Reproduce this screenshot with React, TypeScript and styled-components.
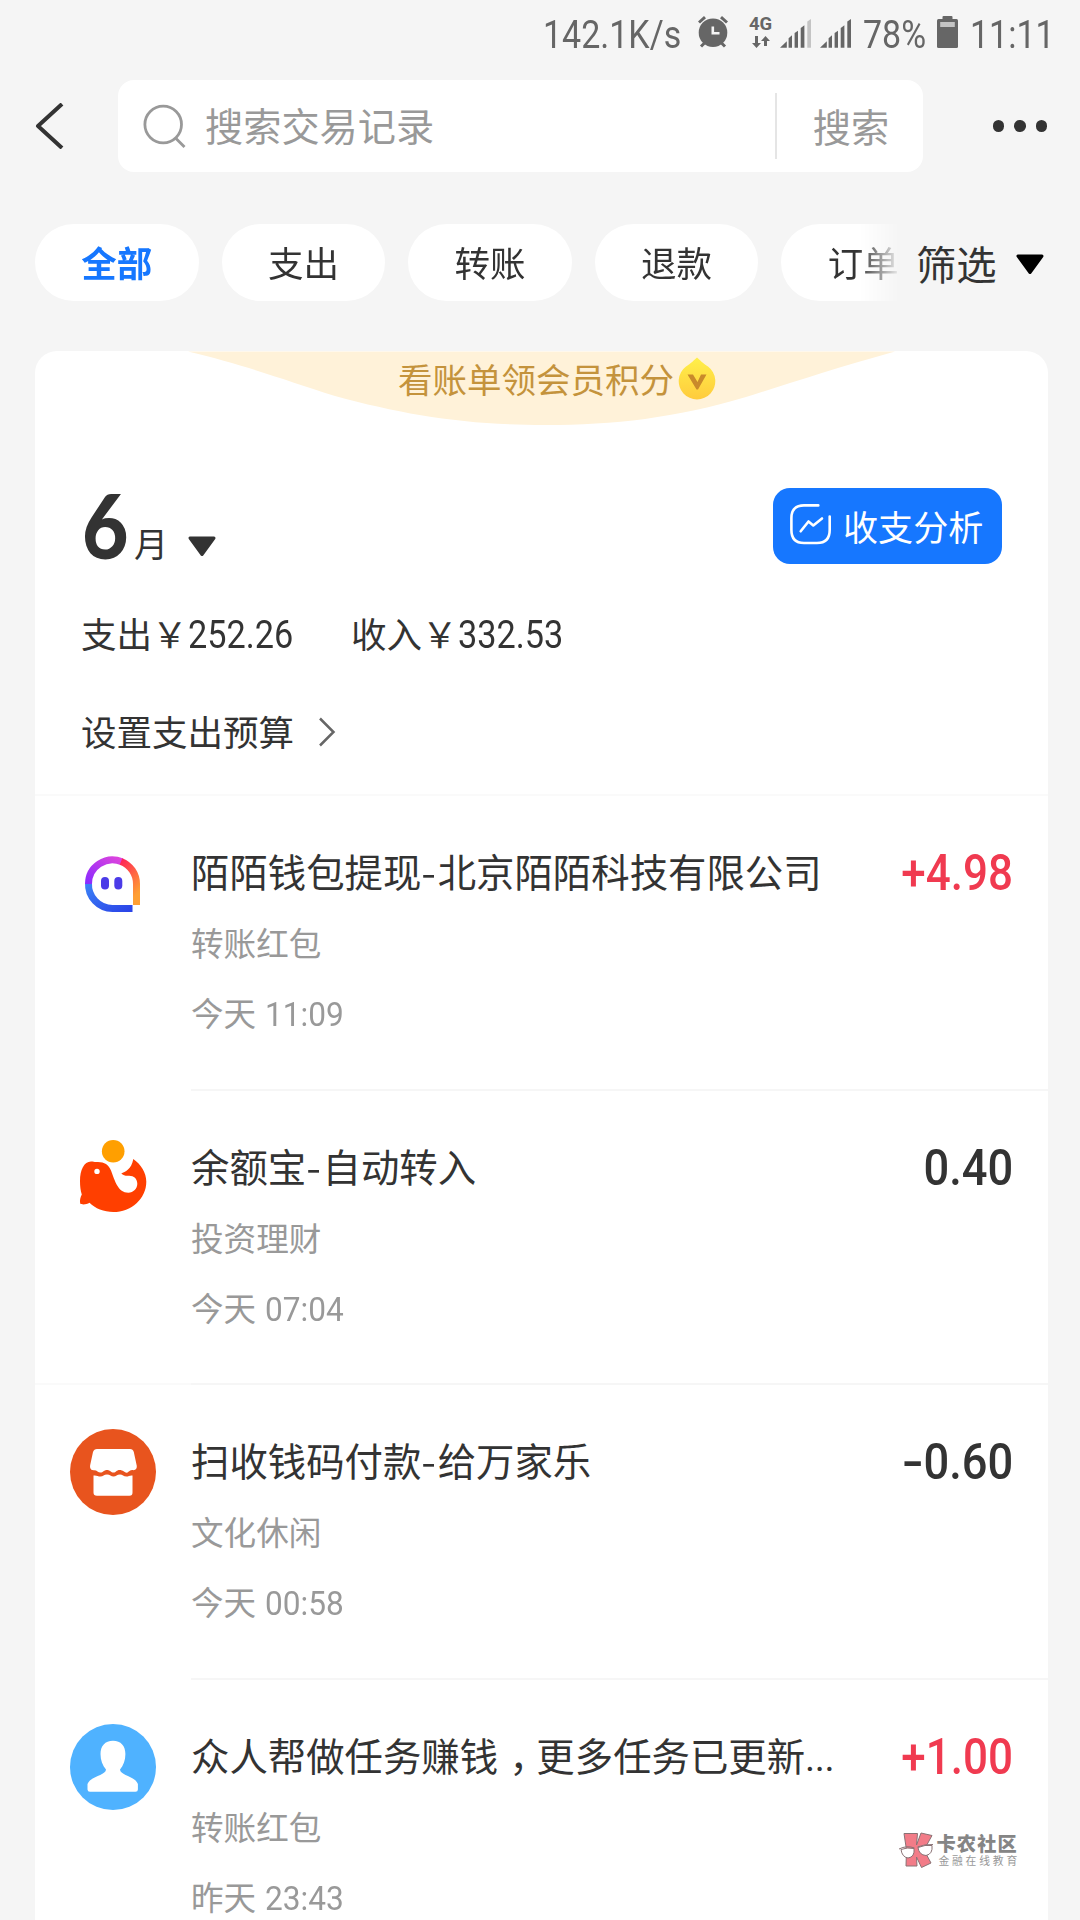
import { FC, ReactNode } from 'react'
import styled, { createGlobalStyle } from 'styled-components'

const GlobalStyle = createGlobalStyle`
  * {
    box-sizing: border-box;
  }

  body {
    margin: 0;
    background: #f5f5f5;
    color: #333;
    font-family: 'Noto Sans CJK SC', sans-serif;
    overflow: hidden;
  }

  svg {
    display: block;
    flex: none;
  }
`

const Screen = styled.div`
  display: flex;
  flex-direction: column;
  width: 1080px;
  height: 1920px;
  overflow: hidden;
  position: relative;
`

// Narrow digits, Roboto squeezed horizontally
const Digits = styled.span<{ $scale: number; $origin?: string }>`
  display: inline-block;
  font-family: Roboto, sans-serif;
  white-space: pre;
  transform: scaleX(${(p) => p.$scale});
  transform-origin: ${(p) => p.$origin || 'left'} center;
`

/* Status bar */

const StatusBar = styled.div`
  display: flex;
  align-items: center;
  justify-content: flex-end;
  height: 66px;
  padding-right: 29px;
  color: #666;
`

const StatusText = styled.div<{ $width: number }>`
  width: ${(p) => p.$width}px;
  height: 66px;
  font-size: 39.5px;
  line-height: 61px;
  white-space: nowrap;
`

const Network = styled.div`
  display: flex;
  flex-direction: column;
  align-items: center;
  width: 25px;
  margin: -3px 7px 0 20px;
  font: bold 18.5px/18px Roboto, sans-serif;

  svg {
    margin-top: 3px;
  }
`

const StatusIcon = styled.div<{ $gap: number }>`
  margin-right: ${(p) => p.$gap}px;
`

const AlarmIcon = () => (
  <svg width='30' height='34' viewBox='0 0 30 34'>
    <circle cx='15' cy='16.7' r='14.3' fill='#666' />
    <path d='M1 6.5 7 1.2M29 6.5 23 1.2' stroke='#666' strokeWidth='3' />
    <path d='M3 30.5 6.5 27M27 30.5 23.5 27' stroke='#666' strokeWidth='3' />
    <path d='M14.8 10.5V17.3H21.5' stroke='#f5f5f5' strokeWidth='2.6' fill='none' />
  </svg>
)

const ArrowsIcon = () => (
  <svg width='18' height='12' viewBox='0 0 18 12'>
    <path d='M3 0H6V7H9L4.5 12 0 7H3ZM12 10H15V5H18L13.5 0 9 5H12Z' fill='#666' />
  </svg>
)

const SignalIcon: FC<{ weak?: boolean }> = ({ weak }) => (
  <svg width='32' height='34' viewBox='0 0 32 34' fill='#666'>
    <path d='M0 31.7 6.8 25.2V31.7Z' />
    <path d='M8.6 22.2 12 19.2V31.7H8.6Z' />
    <path d='M14.6 17 18 14.8V31.7H14.6Z' />
    <path d='M20.7 12 24.4 9.3V31.7H20.7Z' />
    <path d='M27.3 5.5 31 3V31.7H27.3Z' fill={weak ? '#c4c4c4' : '#666'} />
  </svg>
)

const BatteryIcon = () => (
  <svg width='21' height='34' viewBox='0 0 21 34'>
    <rect x='5.5' width='10' height='5' rx='1' fill='#666' />
    <rect y='3' width='21' height='29' rx='1.5' fill='#666' />
    <rect x='3.2' y='6' width='14.6' height='5' fill='#c4c4c4' />
  </svg>
)

/* Header */

const Header = styled.div`
  display: flex;
  align-items: center;
  height: 92px;
  margin-top: 14px;
  padding: 0 33px 0 35px;
`

const SearchBox = styled.div`
  display: flex;
  align-items: center;
  width: 805px;
  height: 92px;
  margin: 0 70px 0 54px;
  padding-left: 25px;
  border-radius: 16px;
  background: #fff;
  color: #999;
  font-size: 38.2px;
  line-height: 54px;
`

const Placeholder = styled.div`
  flex: 1;
  height: 56px;
  padding-left: 19px;
`

const SearchButton = styled.div`
  width: 148px;
  height: 66px;
  padding: 6px 0 0 36px;
  border-left: 2px solid #e5e5e5;
`

const Dots = styled.div`
  display: flex;
  gap: 10px;
`

const Dot = styled.i`
  width: 11.4px;
  height: 11.4px;
  border-radius: 50%;
  background: #333;
`

/* Filter chips */

const Filters = styled.div`
  display: flex;
  height: 77px;
  margin-top: 52px;
  padding-left: 35px;
`

const ChipList = styled.div`
  display: flex;
  gap: 23px;
  width: 868px;
  overflow: hidden;
  mask-image: linear-gradient(to right, #000 822px, transparent 866px);
`

const Chip = styled.div<{ $active?: boolean }>`
  flex: none;
  width: 163.6px;
  height: 77px;
  border-radius: 39px;
  background: #fff;
  color: ${(p) => (p.$active ? '#1677ff' : '#333')};
  font-size: 35.5px;
  font-weight: ${(p) => (p.$active ? 700 : 400)};
  line-height: 75px;
  text-align: center;
`

const FilterButton = styled.div`
  display: flex;
  align-items: center;
  gap: 18px;
  margin-left: 13px;
  font-size: 40.3px;
  line-height: 72px;

  svg {
    margin-top: 4px;
  }
`

const Triangle: FC<{ color: string }> = ({ color }) => (
  <svg width='30' height='21' viewBox='0 0 30 21'>
    <path d='M3 2H27L15 18.5Z' fill={color} stroke={color} strokeWidth='3' strokeLinejoin='round' />
  </svg>
)

/* Card */

const Card = styled.div`
  width: 1013px;
  height: 1600px;
  margin: 50px 0 0 35px;
  border-radius: 22px 22px 0 0;
  background: #fff;
  overflow: hidden;
`

const Banner = styled.div`
  display: grid;
  height: 75px;

  > * {
    grid-area: 1 / 1;
  }
`

const BannerText = styled.div`
  display: flex;
  gap: 4px;
  height: 55px;
  padding-left: 363px;
  color: #c4933c;
  font-size: 34.5px;
  line-height: 55px;
`

const Summary = styled.div`
  height: 368px;
  padding: 0 46px;
`

const SummaryTop = styled.div`
  display: flex;
  justify-content: space-between;
  height: 138px;
  padding-top: 62px;
`

const Month = styled.div`
  display: flex;
  align-items: baseline;
  height: 76px;
  margin-top: -3px;
  font-size: 34px;
  line-height: 76px;

  svg {
    margin-left: 19px;
  }
`

const MonthNumber = styled.div`
  width: 53px;
  padding-left: 1px;
  font: 900 89px/76px Lato, sans-serif;
  transform: translateY(2px) scaleX(0.9);
  transform-origin: left center;
`

const AnalysisButton = styled.div`
  display: flex;
  align-items: center;
  gap: 11px;
  width: 229px;
  height: 76px;
  padding-left: 17px;
  border-radius: 17px;
  background: #1677ff;
  color: #fff;
  font-size: 35.1px;
  line-height: 70px;

  svg {
    margin-top: -4px;
  }
`

const Totals = styled.div`
  display: flex;
  height: 52px;
  margin-top: 43px;
  font-size: 35.5px;
  line-height: 52px;
`

const Total = styled.div`
  width: 270px;
  white-space: nowrap;

  ${Digits} {
    font-size: 38.5px;
  }
`

const Budget = styled.div`
  display: flex;
  align-items: center;
  gap: 23px;
  height: 52px;
  margin-top: 46px;
  font-size: 35.5px;
  line-height: 48px;

  svg {
    margin-top: 1px;
  }
`

/* Records */

const Record = styled.div<{ $line: string }>`
  display: flex;
  gap: 36px;
  height: 294.7px;
  padding-left: 35px;
  background: linear-gradient(${(p) => p.$line}, ${(p) => p.$line}) 0 0 / 100% 2px no-repeat;

  > svg {
    margin-top: 46px;
  }
`

const RecordBody = styled.div<{ $line: string }>`
  display: flex;
  flex: 1;
  justify-content: space-between;
  margin-left: -1px;
  padding: 46px 35px 0 0;
  border-top: 2px solid ${(p) => p.$line};
`

const Title = styled.div`
  height: 56px;
  font-size: 38.4px;
  line-height: 56px;
  white-space: nowrap;
`

// Half-width comma centred in a full-width cell
const Comma = styled.span`
  padding: 0 8px 0 11px;
  font-feature-settings: 'halt';
`

const Hyphen = styled.span`
  display: inline-block;
  margin: 0 2px 0 1px;
  transform: scaleX(1.1);
`

const Ellipsis = styled.span`
  font-family: Roboto, sans-serif;
  line-height: 1;
  letter-spacing: -0.4px;
`

const Muted = styled.div<{ $top: number }>`
  height: 44px;
  margin-top: ${(p) => p.$top}px;
  color: #999;
  font-size: 32.6px;
  line-height: 44px;

  ${Digits} {
    margin-left: 9px;
    font-size: 34px;
  }
`

const Amount = styled(Digits)<{ $income?: boolean }>`
  color: ${(p) => (p.$income ? '#f03a50' : '#333')};
  font-size: 50px;
  font-weight: 500;
  line-height: 63px;
  height: 64px;
`

const Minus = styled.span`
  display: inline-block;
  transform: scaleX(1.4);
  transform-origin: right center;
`

const ChatLogo = () => (
  <svg width='86' height='86' viewBox='0 0 86 86' fill='none' strokeWidth='7'>
    <defs>
      <linearGradient id='blue' x1='0' y1='0' x2='1' y2='1'>
        <stop offset='0' stopColor='#3b82f6' />
        <stop offset='1' stopColor='#2b45e8' />
      </linearGradient>
      <linearGradient id='purple' x1='0' y1='1' x2='1' y2='0'>
        <stop offset='0' stopColor='#8a2bff' />
        <stop offset='1' stopColor='#dd44dd' />
      </linearGradient>
      <linearGradient id='red' x1='0' y1='0' x2='0.4' y2='1'>
        <stop offset='0' stopColor='#ff2555' />
        <stop offset='1' stopColor='#ff9f33' />
      </linearGradient>
    </defs>
    <path d='M62.5 68.5H42.5A24.3 24.3 0 0 1 18.5 43' stroke='url(#blue)' />
    <path d='M18.5 44A24 24 0 0 1 52 21.8' stroke='url(#purple)' />
    <path d='M51 21.4A24.2 24.2 0 0 1 66.5 44V65' stroke='url(#red)' />
    <rect x='31' y='37' width='8' height='12.5' rx='4' fill='#4b3be8' />
    <rect x='44.3' y='37' width='8' height='12.5' rx='4' fill='#4b3be8' />
  </svg>
)

const FundLogo = () => (
  <svg width='86' height='86' viewBox='0 0 86 86'>
    <circle cx='43.2' cy='16.3' r='11.3' fill='#ff9f00' />
    <path
      d='M10 46C10 35 14 26.7 21 26.5 23.5 26.5 24.5 27.2 27 27 34 26.7 38.5 29.5 41 35.5 45 46 48 57.7 58.3 57.7 63.5 57.7 67.3 53.5 67.3 48.8 67.3 43 63 40 57.5 40.8 55 40.8 53 40 51.3 38.4 55 37 61.5 34.5 63.3 24 71 29.5 76.3 37.5 76.3 46.7 76.3 63.5 61.5 77 43.3 77 34 77 25 73.5 19.5 67.8 16.5 69.5 12 70 10.2 68.5 9.5 65 10.5 62 11.8 59.5 10.5 56 10 51 10 46Z'
      fill='#ff3f00'
    />
    <circle cx='27' cy='36.4' r='2.7' fill='#fff' />
  </svg>
)

const StoreLogo = () => (
  <svg width='86' height='86' viewBox='0 0 86 86'>
    <circle cx='43' cy='43' r='43' fill='#e8541e' />
    <path
      d='M27 20H60Q63 20 63.8 23L66.8 37Q67 41 63.5 41.2C60.5 40.5 59 42.5 57.5 43.5 55 44.5 53.5 41 49.5 41 46.5 41 46 43.6 43.5 43.6 41 43.6 40 41 37 41 34 41 33 43.6 30.5 43.6 28 43.6 27 41 23.5 41.3 20 41 19.8 38 20.2 36L23 23Q24 20 27 20Z'
      fill='#fff'
    />
    <path
      d='M23.5 46.5C26.5 46 28 47.5 30.5 47.5 33 47.5 34 45.5 37 45.5 40 45.5 41 47.5 43.5 47.5 46 47.5 47 45.5 50 45.5 52.5 45.5 53.5 47.5 56.5 47.5 58.5 47.5 60 46 62.5 46.5V63.5Q62.5 66.8 59.5 66.8H27Q23.5 66.8 23.5 63.5Z'
      fill='#fff'
    />
  </svg>
)

const PersonLogo = () => (
  <svg width='86' height='86' viewBox='0 0 86 86'>
    <circle cx='43' cy='43' r='43' fill='#4fb2ff' />
    <path
      d='M43 16.7C51 16.7 55.4 22 55.4 30 55.4 36 53.5 41.5 50 45.5 50.3 51.5 65 52 67.9 60V65.5Q67.9 67.7 65.5 67.7H20Q17.5 67.7 17.5 65.5V60C20.5 52 35.7 51.5 36 45.5 32.5 41.5 30.5 36 30.5 30 30.5 22 35 16.7 43 16.7Z'
      fill='#fff'
    />
  </svg>
)

/* Community watermark */

const Watermark = styled.div`
  position: absolute;
  right: 60px;
  top: 1831px;
  display: flex;
  gap: 2px;
  color: #858585;

  svg {
    margin-top: -5px;
  }
`

const WatermarkName = styled.div`
  height: 22px;
  font-size: 19.2px;
  font-weight: 900;
  letter-spacing: 1.2px;
  line-height: 24px;
`

const WatermarkNote = styled.div`
  height: 14px;
  padding-left: 2px;
  color: #999;
  font-size: 10.8px;
  letter-spacing: 2.8px;
  line-height: 15px;
  white-space: nowrap;
`

const WatermarkLogo = () => (
  <svg width='35' height='44' viewBox='0 0 35 44' stroke='#8a7275' strokeWidth='1'>
    <path d='M5 7.5H18.5L17.5 19 22 7 33 9.5 25 24 32 37 22.5 41.5 17.5 31 18 40H7L7.5 24Z' fill='#f27c88' />
    <path d='M0 23Q8 19 15.5 22M18.5 21Q26 18 34 18.5' fill='none' />
    <path d='M2 23.5Q8 21 15 22.5 16 31 9 32 3 31 2 23.5ZM19 21.5Q26 18.5 33 19.5 34 28 27 29.5 20 29 19 21.5Z' fill='#fff' />
  </svg>
)

type RecordItem = {
  logo: ReactNode
  title: ReactNode
  category: string
  day: string
  time: string
  amount: string
  full?: boolean
}

const chips = ['全部', '支出', '转账', '退款', '订单']

const records: RecordItem[] = [
  {
    logo: <ChatLogo />,
    title: (
      <>
        陌陌钱包提现<Hyphen>-</Hyphen>北京陌陌科技有限公司
      </>
    ),
    category: '转账红包',
    day: '今天',
    time: '11:09',
    amount: '+4.98',
    full: true,
  },
  {
    logo: <FundLogo />,
    title: (
      <>
        余额宝<Hyphen>-</Hyphen>自动转入
      </>
    ),
    category: '投资理财',
    day: '今天',
    time: '07:04',
    amount: '0.40',
  },
  {
    logo: <StoreLogo />,
    title: (
      <>
        扫收钱码付款<Hyphen>-</Hyphen>给万家乐
      </>
    ),
    category: '文化休闲',
    day: '今天',
    time: '00:58',
    amount: '-0.60',
    full: true,
  },
  {
    logo: <PersonLogo />,
    title: (
      <>
        众人帮做任务赚钱<Comma>，</Comma>更多任务已更新<Ellipsis>...</Ellipsis>
      </>
    ),
    category: '转账红包',
    day: '昨天',
    time: '23:43',
    amount: '+1.00',
  },
]

const RecordRow: FC<{ data: RecordItem; first: boolean }> = ({ data, first }) => {
  const income = data.amount.startsWith('+')

  return (
    <Record $line={data.full ? '#fafafa' : 'transparent'}>
      {data.logo}
      <RecordBody $line={first ? 'transparent' : '#f6f6f6'}>
        <div>
          <Title>{data.title}</Title>
          <Muted $top={22}>{data.category}</Muted>
          <Muted $top={26}>
            {data.day}
            <Digits $scale={0.93}>{data.time}</Digits>
          </Muted>
        </div>
        <Amount $scale={income ? 0.88 : 0.905} $origin='right' $income={income}>
          {data.amount.startsWith('-') && <Minus>-</Minus>}
          {data.amount.replace('-', '')}
        </Amount>
      </RecordBody>
    </Record>
  )
}

const App = () => (
  <Screen>
    <GlobalStyle />
    <StatusBar>
      <StatusText $width={155}>
        <Digits $scale={0.86}>142.1K/s</Digits>
      </StatusText>
      <AlarmIcon />
      <Network>
        4G
        <ArrowsIcon />
      </Network>
      <StatusIcon $gap={8}>
        <SignalIcon weak />
      </StatusIcon>
      <StatusIcon $gap={11}>
        <SignalIcon />
      </StatusIcon>
      <StatusText $width={74}>
        <Digits $scale={0.86}>78%</Digits>
      </StatusText>
      <StatusIcon $gap={12}>
        <BatteryIcon />
      </StatusIcon>
      <StatusText $width={81}>
        <Digits $scale={0.86}>11:11</Digits>
      </StatusText>
    </StatusBar>

    <Header>
      <svg width='29' height='46' viewBox='0 0 29 46'>
        <path d='M27 1 3 23 27 45' fill='none' stroke='#333' strokeWidth='4' strokeLinejoin='round' />
      </svg>
      <SearchBox>
        <svg width='43' height='44' viewBox='0 0 43 44' fill='none' stroke='#999' strokeWidth='2.8'>
          <circle cx='20.2' cy='20.5' r='18.3' />
          <path d='M32.5 34 41.5 43' />
        </svg>
        <Placeholder>搜索交易记录</Placeholder>
        <SearchButton>搜索</SearchButton>
      </SearchBox>
      <Dots>
        <Dot />
        <Dot />
        <Dot />
      </Dots>
    </Header>

    <Filters>
      <ChipList>
        {chips.map((chip, i) => (
          <Chip key={chip} $active={i === 0}>
            {chip}
          </Chip>
        ))}
      </ChipList>
      <FilterButton>
        筛选
        <Triangle color='#000' />
      </FilterButton>
    </Filters>

    <Card>
      <Banner>
        <svg width='1013' height='75' viewBox='0 0 1013 75'>
          <path d='M153 0.5H860C800 17 750 34 711 46 640 67 580 74 510 74 430 74 370 64 300 45 250 29 210 14 153 0.5Z' fill='#fff2d9' />
        </svg>
        <BannerText>
          看账单领会员积分
          <svg width='38' height='50' viewBox='0 0 38 50'>
            <defs>
              <linearGradient id='drop' x1='0' y1='0' x2='0' y2='1'>
                <stop offset='0' stopColor='#fff04a' />
                <stop offset='1' stopColor='#ffcb3d' />
              </linearGradient>
            </defs>
            <path d='M19 6.5C22 9 24.5 12 30 15.5A18.3 18.3 0 1 1 8 15.5C13.5 12 16 9 19 6.5Z' fill='url(#drop)' />
            <path d='M9.5 23.5H15L19.5 31 23 23.5H28.5L20 38.5H18.5Z' fill='#c98a2b' />
          </svg>
        </BannerText>
      </Banner>

      <Summary>
        <SummaryTop>
          <Month>
            <MonthNumber>6</MonthNumber>月
            <Triangle color='#333' />
          </Month>
          <AnalysisButton>
            <svg width='42' height='41' viewBox='0 0 42 41' fill='none' stroke='#fff' strokeWidth='2.6' strokeLinecap='round'>
              <path d='M28.3 1.4H14Q1.4 1.4 1.4 14V26Q1.4 39 14 39H27Q39.7 39 39.7 26V12.5' />
              <path d='M10.7 27.3 18.5 17.5 23.3 21.5 32 14.5' strokeLinejoin='round' />
            </svg>
            收支分析
          </AnalysisButton>
        </SummaryTop>
        <Totals>
          <Total>
            支出￥<Digits $scale={0.89}>252.26</Digits>
          </Total>
          <Total>
            收入￥<Digits $scale={0.89}>332.53</Digits>
          </Total>
        </Totals>
        <Budget>
          设置支出预算
          <svg width='20' height='30' viewBox='0 0 20 30'>
            <path d='M3 1.5 16.5 15 3 28.5' fill='none' stroke='#666' strokeWidth='2.5' />
          </svg>
        </Budget>
      </Summary>

      {records.map((record, i) => (
        <RecordRow key={i} data={record} first={i === 0} />
      ))}
    </Card>

    <Watermark>
      <WatermarkLogo />
      <div>
        <WatermarkName>卡农社区</WatermarkName>
        <WatermarkNote>金融在线教育</WatermarkNote>
      </div>
    </Watermark>
  </Screen>
)

export default App
